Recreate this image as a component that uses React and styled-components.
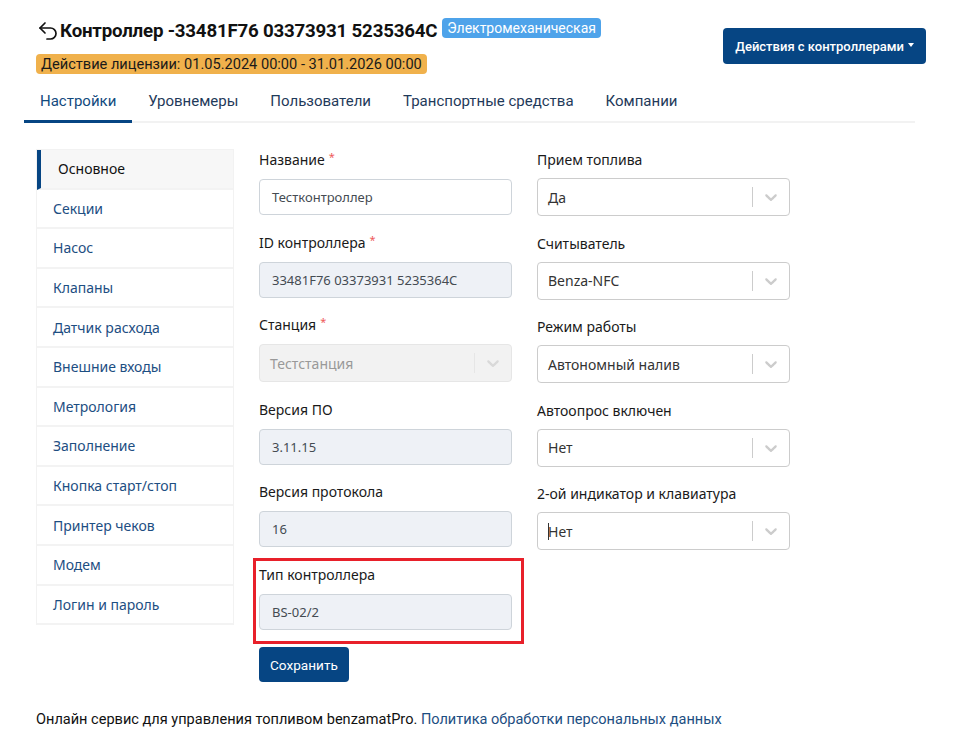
import React from 'react';
import styled, { createGlobalStyle } from 'styled-components';
import { Undo2 } from 'lucide-react';

const colors = {
	navy: '#064583',
	text: '#212529',
	link: '#1d4e82',
	border: '#ced4da',
	disabledBg: '#eef1f6',
	selectBorder: '#cccccc'
};

const GlobalStyle = createGlobalStyle`
	body {
		margin: 0;
		background: #ffffff;
		font-family: "Noto Sans", "Open Sans", sans-serif;
		color: ${colors.text};
	}
	* {
		box-sizing: border-box;
	}
`;

const Page = styled.div`
	padding: 18px 15px 0 24px;
	width: 955px;
`;

const Header = styled.div`
	display: flex;
	justify-content: space-between;
	align-items: flex-start;
	padding: 0 14px 0 12px;
`;

const HeaderLeft = styled.div`
	display: flex;
	flex-direction: column;
	gap: 10px;
`;

const TitleRow = styled.div`
	display: flex;
	align-items: center;
	height: 26px;
`;

const BackIcon = styled(Undo2)`
	width: 24px;
	height: 24px;
	color: #111;
	flex-shrink: 0;
`;

const Title = styled.h1`
	margin: 0;
	font-family: Roboto, "Liberation Sans", sans-serif;
	font-size: 18.7px;
	font-weight: 700;
	color: #111;
	letter-spacing: -0.2px;
`;

const Badge = styled.span`
	display: inline-block;
	font-family: Roboto, "Liberation Sans", sans-serif;
	font-size: ${p => p.size || 14}px;
	line-height: 20px;
	padding: 0 5px;
	border-radius: 4px;
	background: ${p => p.bg};
	color: ${p => p.color};
	margin-left: ${p => p.offset || 0}px;
	align-self: flex-start;
`;

const ActionsButton = styled.button`
	margin-top: 10px;
	height: 36px;
	padding: 0 12px;
	border: none;
	border-radius: 4px;
	background: ${colors.navy};
	color: #fff;
	font-family: Roboto, "Liberation Sans", sans-serif;
	font-size: 13px;
	font-weight: 500;
	display: flex;
	align-items: center;
	&::after {
		content: '';
		display: inline-block;
		margin-left: 4px;
		border-top: 4px solid #fff;
		border-left: 3px solid transparent;
		border-right: 3px solid transparent;
		margin-top: -2px;
	}
`;

const Tabs = styled.div`
	display: flex;
	margin-top: 7px;
	margin-right: 25px;
	border-bottom: 2px solid #f2f2f2;
`;

const Tab = styled.div`
	font-family: Roboto, "Liberation Sans", sans-serif;
	font-size: 15px;
	line-height: 20px;
	padding: 10px 16px 9px;
	color: ${p => (p.active ? '#124a7e' : '#1f3a5a')};
	border-bottom: 3px solid ${p => (p.active ? colors.navy : 'transparent')};
	margin-bottom: -2px;
`;

const Content = styled.div`
	display: flex;
	gap: 25px;
	padding-left: 12px;
	margin-top: 26px;
`;

const SideNav = styled.div`
	width: 198px;
	display: flex;
	flex-direction: column;
	border: 1px solid #f2f2f2;
	border-bottom: none;
	align-self: flex-start;
`;

const NavItem = styled.div`
	height: 39.6px;
	display: flex;
	align-items: center;
	font-size: 14px;
	padding-left: ${p => (p.active ? 17 : 16)}px;
	color: ${p => (p.active ? '#111' : colors.link)};
	background: ${p => (p.active ? '#f7f7f7' : '#fff')};
	border-left: ${p => (p.active ? `4px solid ${colors.navy}` : 'none')};
	border-bottom: 2px solid #f3f3f3;
`;

const FormGrid = styled.div`
	display: grid;
	grid-template-columns: 253px 253px;
	column-gap: 25px;
	align-items: start;
	padding-top: 1px;
`;

const Column = styled.div`
	display: flex;
	flex-direction: column;
`;

const Group = styled.div`
	position: relative;
	margin-bottom: ${p => p.gap}px;
	${p => p.highlight && `
		&::after {
			content: '';
			position: absolute;
			top: -7px;
			left: -6px;
			right: -12px;
			bottom: -14px;
			border: 3px solid #e8202a;
			pointer-events: none;
		}
	`}
`;

const Label = styled.div`
	font-size: 14px;
	line-height: 20px;
	margin-bottom: ${p => p.gap}px;
	color: #1a1a1a;
`;

const Required = styled.span`
	color: #ee5a5a;
	font-size: 11px;
	vertical-align: top;
	margin-left: 4px;
	line-height: 14px;
`;

const Input = styled.div`
	height: 36px;
	display: flex;
	align-items: center;
	padding: 0 12px;
	border: 1px solid ${colors.border};
	border-radius: 4px;
	background: ${p => (p.disabled ? colors.disabledBg : '#fff')};
	font-size: 13px;
	color: #444b52;
`;

const Select = styled.div`
	height: 38px;
	display: flex;
	align-items: center;
	border: 1px solid ${p => (p.disabled ? '#e6e6e6' : colors.selectBorder)};
	border-radius: 4px;
	background: ${p => (p.disabled ? '#f2f2f2' : '#fff')};
`;

const SelectValue = styled.div`
	flex: 1;
	padding-left: 10px;
	font-size: 14px;
	color: ${p => (p.disabled ? '#999' : '#333')};
	display: flex;
	align-items: center;
`;

const Caret = styled.span`
	display: inline-block;
	width: 1px;
	height: 17px;
	background: #333;
	margin-right: -1px;
`;

const Separator = styled.span`
	width: 1px;
	align-self: stretch;
	margin: 8px 0;
	background: ${p => (p.disabled ? '#e6e6e6' : colors.selectBorder)};
`;

const Chevron = styled.svg`
	width: 20px;
	height: 20px;
	margin: 0 8px;
	fill: ${p => (p.disabled ? '#d9d9d9' : colors.selectBorder)};
`;

const SaveButton = styled.button`
	align-self: flex-start;
	height: 35px;
	padding: 0 11px;
	border: none;
	border-radius: 4px;
	background: ${colors.navy};
	color: #fff;
	font-family: Roboto, "Liberation Sans", sans-serif;
	font-size: 13.6px;
`;

const Footer = styled.div`
	padding-left: 12px;
	margin-top: 28px;
	font-family: Roboto, "Liberation Sans", sans-serif;
	font-size: 14.55px;
	line-height: 20px;
	color: #111;
`;

const FooterLink = styled.a`
	color: ${colors.link};
	text-decoration: none;
`;

const navItems = [
	'Основное', 'Секции', 'Насос', 'Клапаны', 'Датчик расхода', 'Внешние входы',
	'Метрология', 'Заполнение', 'Кнопка старт/стоп', 'Принтер чеков', 'Модем', 'Логин и пароль'
];

const tabs = ['Настройки', 'Уровнемеры', 'Пользователи', 'Транспортные средства', 'Компании'];

const ChevronIcon = ({ disabled }) => (
	<Chevron viewBox="0 0 20 20" disabled={disabled}>
		<path d="M4.516 7.548c0.436-0.446 1.043-0.481 1.576 0l3.908 3.747 3.908-3.747c0.533-0.481 1.141-0.446 1.574 0 0.436 0.445 0.408 1.197 0 1.615-0.406 0.418-4.695 4.502-4.695 4.502-0.217 0.223-0.502 0.335-0.787 0.335s-0.57-0.112-0.789-0.335c0 0-4.287-4.084-4.695-4.502s-0.436-1.17 0-1.615z" />
	</Chevron>
);

const SelectField = ({ value, disabled, caret }) => (
	<Select disabled={disabled}>
		<SelectValue disabled={disabled}>
			{caret && <Caret />}
			{value}
		</SelectValue>
		<Separator disabled={disabled} />
		<ChevronIcon disabled={disabled} />
	</Select>
);

const leftFields = [
	{ label: 'Название', value: 'Тестконтроллер', required: true },
	{ label: 'ID контроллера', value: '33481F76 03373931 5235364C', required: true, disabled: true },
	{ label: 'Станция', value: 'Тестстанция', required: true, select: true, disabled: true },
	{ label: 'Версия ПО', value: '3.11.15', disabled: true },
	{ label: 'Версия протокола', value: '16', disabled: true },
	{ label: 'Тип контроллера', value: 'BS-02/2', disabled: true, highlight: true }
];

const rightFields = [
	{ label: 'Прием топлива', value: 'Да' },
	{ label: 'Считыватель', value: 'Benza-NFC' },
	{ label: 'Режим работы', value: 'Автономный налив' },
	{ label: 'Автоопрос включен', value: 'Нет' },
	{ label: '2-ой индикатор и клавиатура', value: 'Нет', caret: true }
];

const App = () => (
	<>
		<GlobalStyle />
		<Page>
			<Header>
				<HeaderLeft>
					<TitleRow>
						<BackIcon strokeWidth={1.7} />
						<Title>Контроллер -33481F76 03373931 5235364C</Title>
						<Badge bg="#4ea3ea" color="#fff" offset={5}>Электромеханическая</Badge>
					</TitleRow>
					<Badge bg="#f0b14c" color="#1a1a1a" size={14.6}>Действие лицензии: 01.05.2024 00:00 - 31.01.2026 00:00</Badge>
				</HeaderLeft>
				<ActionsButton>Действия с контроллерами</ActionsButton>
			</Header>

			<Tabs>
				{tabs.map((t, i) => (
					<Tab key={t} active={i === 0}>{t}</Tab>
				))}
			</Tabs>

			<Content>
				<SideNav>
					{navItems.map((n, i) => (
						<NavItem key={n} active={i === 0}>{n}</NavItem>
					))}
				</SideNav>

				<FormGrid>
					<Column>
						{leftFields.map(f => (
							<Group key={f.label} gap={17.5} highlight={f.highlight}>
								<Label gap={9}>
									{f.label}
									{f.required && <Required>*</Required>}
								</Label>
								{f.select
									? <SelectField value={f.value} disabled={f.disabled} />
									: <Input disabled={f.disabled}>{f.value}</Input>}
							</Group>
						))}
						<SaveButton>Сохранить</SaveButton>
					</Column>
					<Column>
						{rightFields.map(f => (
							<Group key={f.label} gap={17.5}>
								<Label gap={8}>{f.label}</Label>
								<SelectField value={f.value} caret={f.caret} />
							</Group>
						))}
					</Column>
				</FormGrid>
			</Content>

			<Footer>
				Онлайн сервис для управления топливом benzamatPro. <FooterLink href="#">Политика обработки персональных данных</FooterLink>
			</Footer>
		</Page>
	</>
);

export default App;
